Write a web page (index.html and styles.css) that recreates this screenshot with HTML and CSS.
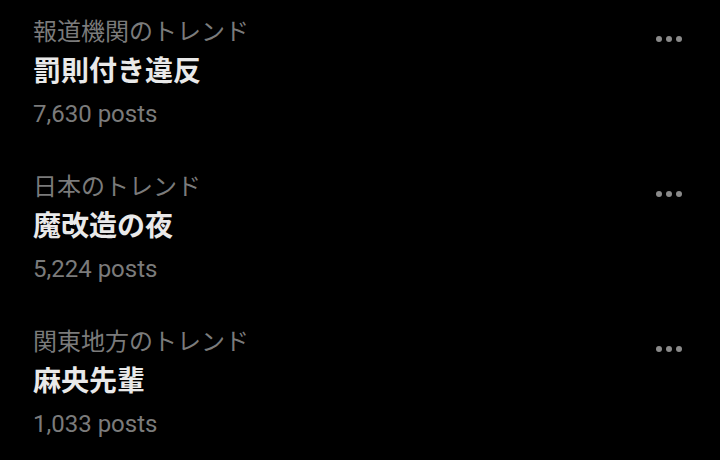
FILE: index.html
```html
<!DOCTYPE html>
<html lang="ja">
<head>
<meta charset="utf-8">
<link rel="stylesheet" href="styles.css">
</head>
<body>
<div class="list">
  <div class="item">
    <div class="text">
      <div class="cat">報道機関のトレンド</div>
      <div class="title">罰則付き違反</div>
      <div class="posts">7,630 posts</div>
    </div>
    <div class="more"><span></span><span></span><span></span></div>
  </div>
  <div class="item">
    <div class="text">
      <div class="cat">日本のトレンド</div>
      <div class="title">魔改造の夜</div>
      <div class="posts">5,224 posts</div>
    </div>
    <div class="more"><span></span><span></span><span></span></div>
  </div>
  <div class="item">
    <div class="text">
      <div class="cat">関東地方のトレンド</div>
      <div class="title">麻央先輩</div>
      <div class="posts">1,033 posts</div>
    </div>
    <div class="more"><span></span><span></span><span></span></div>
  </div>
</div>
</body>
</html>
```
FILE: styles.css
```css
html, body {
  margin: 0;
  background: #000;
}
body {
  width: 720px;
  height: 460px;
  overflow: hidden;
  font-family: Roboto, "Noto Sans CJK JP", sans-serif;
}
.list {
  display: flex;
  flex-direction: column;
  padding-top: 16px;
}
.item {
  display: flex;
  justify-content: space-between;
  align-items: flex-start;
  height: 155px;
  box-sizing: border-box;
  padding: 0 38px 0 33px;
}
.text {
  display: flex;
  flex-direction: column;
}
.cat {
  font-size: 24px;
  line-height: 32px;
  color: #7b7b7b;
}
.title {
  font-size: 28px;
  line-height: 40px;
  margin-top: 4px;
  font-weight: 700;
  color: #e9e9e9;
}
.posts {
  font-size: 24px;
  line-height: 42px;
  margin-top: 1px;
  color: #7b7b7b;
}
.more {
  display: flex;
  gap: 4px;
  margin-top: 20px;
}
.more span {
  width: 6px;
  height: 6px;
  border-radius: 50%;
  background: #8a8a8a;
}
```
